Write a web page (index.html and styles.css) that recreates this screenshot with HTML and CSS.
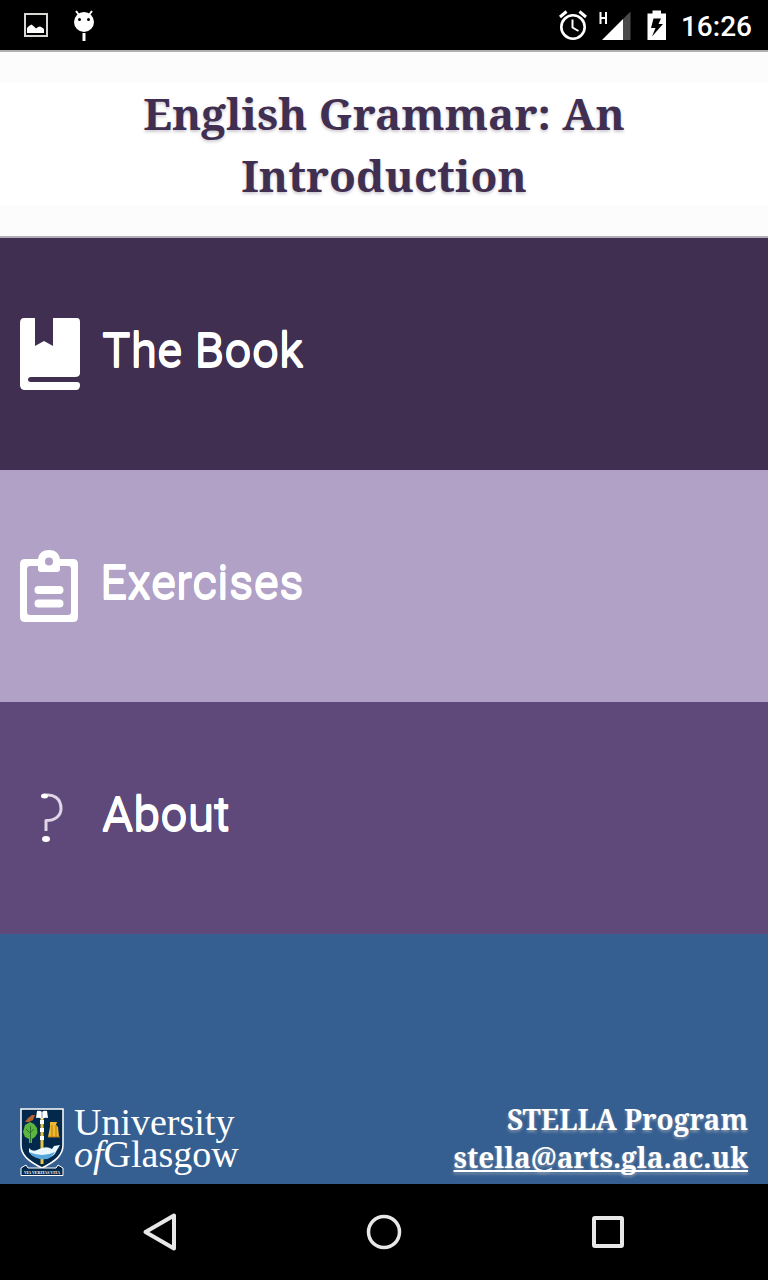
FILE: index.html
```html
<!DOCTYPE html>
<html lang="en">
<head>
<meta charset="utf-8">
<meta name="viewport" content="width=device-width, initial-scale=1">
<title>English Grammar: An Introduction</title>
<link rel="stylesheet" href="styles.css">
</head>
<body>
<div class="status">
  <div class="status-group notifications">
    <svg width="24" height="24" viewBox="0 0 24 24" aria-hidden="true"><rect x="1" y="1" width="22" height="22" fill="none" stroke="#d5d8d2" stroke-width="2"/><path d="M3 20V15L5 13L7.500 11.500L10 13.500L12 15.500L14 14L16 13.500L18 14.500L20 16V20Z" fill="#fff"/></svg>
    <svg width="24" height="32" viewBox="0 0 24 32" aria-hidden="true"><circle cx="12" cy="13" r="10" fill="#fff"/><path d="M4 2L7 6M20 2L17 6" stroke="#fff" stroke-width="2"/><circle cx="7.500" cy="10.500" r="1.500"/><circle cx="16.500" cy="10.500" r="1.500"/><path d="M12 24V32" stroke="#fff" stroke-width="3"/></svg>
  </div>
  <div class="status-group">
    <svg width="28" height="32" viewBox="0 0 28 32" aria-hidden="true" fill="none" stroke="#fff"><circle cx="14" cy="18" r="11.700" stroke-width="2.600"/><path d="M13.500 10.500V18.500L19.500 22" stroke-width="2"/><path d="M1 8L7.500 2.500M27 8L20.500 2.500" stroke-width="3"/></svg>
    <svg class="signal" width="32" height="32" viewBox="0 0 32 32" aria-hidden="true"><path d="M1.500 3V15M7 3V15M1.500 9H7" fill="none" stroke="#fff" stroke-width="2"/><path d="M3 31L24 10V31Z" fill="#fff"/><path d="M24 10L31.500 2.500V31H24Z" fill="#4a4a4a"/></svg>
    <svg class="battery" width="20" height="32" viewBox="0 0 20 32" aria-hidden="true"><path d="M.5 4.500H5.500V1.500H14V4.500H19V31H.5Z" fill="#fff"/><path d="M6.500 9.500H14L11.500 15H16L5 27.500L8.500 19H4Z" fill="#000"/></svg>
    <time class="clock">16:26</time>
  </div>
</div>
<header class="header"><h1 class="title">English Grammar: An Introduction</h1></header>
<nav class="menu">
  <a class="item book" href="#book">
    <svg class="icon" width="60" height="72" viewBox="0 0 60 72" aria-hidden="true"><path fill="#fff" d="M4 0H15V28L24 23L33 28V0H57Q60 0 60 4V55Q60 59 55 59H11Q8 59 8 61.500Q8 64 11 64H57Q60 64 60 67Q60 72 56 72H5Q0 72 0 67V5Q0 0 4 0Z"/></svg>
    <span class="label">The Book</span>
  </a>
  <a class="item exercises" href="#exercises">
    <svg class="icon" width="58" height="72" viewBox="0 0 58 72" aria-hidden="true"><path fill="#fff" fill-rule="evenodd" d="M5 9H18C19 3 23 0 29 0S39 3 40 9H53Q58 9 58 14V67Q58 72 53 72H5Q0 72 0 67V14Q0 9 5 9ZM18 16H10Q7 16 7 19V62Q7 65 10 65H48Q51 65 51 62V19Q51 16 48 16H40V19Q40 22 37 22H21Q18 22 18 19ZM29 7.500A4 4 0 1 0 29 15.500A4 4 0 1 0 29 7.500Z"/><path d="M18.500 40H39.500M18.500 53.500H39.500" stroke="#fff" stroke-width="8" stroke-linecap="round"/></svg>
    <span class="label">Exercises</span>
  </a>
  <a class="item about" href="#about">
    <svg class="icon" width="60" height="72" viewBox="0 0 60 72" aria-hidden="true"><path d="M23 13.500C34 11 41 17 41 26.500C41 34 35 38.500 26 38.500V49" fill="none" stroke="#e0d6e8" stroke-width="3" stroke-linejoin="round"/><ellipse cx="24.500" cy="14" rx="3.500" ry="2.500" fill="#fff"/><ellipse cx="26" cy="57" rx="4" ry="3" fill="#fff"/></svg>
    <span class="label">About</span>
  </a>
</nav>
<footer class="footer">
  <div class="brand">
    <svg width="44" height="68" viewBox="0 1 44 68" role="img" aria-label="University crest"><path d="M1 2H43V38C43 48 36 54 22 61C8 54 1 48 1 38Z" fill="#02294b" stroke="#fff" stroke-width="1.500"/><path d="M22 11V57" stroke="#e8c64c" stroke-width="3"/><path d="M22 13V17M22 21V25M22 29V33" stroke="#fff" stroke-width="4"/><path d="M17 4Q20 3 22 5Q24 3 27 4L28 11Q25 10 22 12Q19 10 16 11Z" fill="#fff"/><path d="M22 5V11" stroke="#7c93a7"/><path d="M5 15L8 11L12 8L15 8L13 13L9 15Z" fill="#b8632d"/><path d="M10 15L14 17L17 21L17.500 26L15 30L12 32V36H9V32L5 30L3 25L5 18Z" fill="#5cb53c"/><path d="M10.500 19V36M6 22L10 26L14 22" stroke="#28732d" fill="none"/><path d="M30 15H37L36 18L38 20L39 30H28L30 20Z" fill="#f0b92b"/><path d="M32 18V30M36 18V30M28 30H40" stroke="#b57918"/><path d="M9 41Q12 45 17 43Q26 38 32 42L34 39L40 38L37 43Q34 51 24 52Q13 51 9 45Z" fill="#e9f7ff"/><path d="M9 45Q22 51 35 45Q30 54 20 52Q12 50 9 45Z" fill="#55a8dc"/><path d="M1 61L6 58L8 61H36L38 58L43 61V68.500H1Z" fill="#02294b" stroke="#fff"/><text class="motto" x="22" y="67" text-anchor="middle">VIA VERITAS VITA</text></svg>
    <p class="wordmark"><i>University</i><br><i class="of">of</i><i>Glasgow</i></p>
  </div>
  <address class="contact">STELLA Program<br><a class="mail" href="mailto:stella@arts.gla.ac.uk">stella@arts.gla.ac.uk</a></address>
</footer>
<div class="navbar">
  <button class="key" aria-label="Back"><svg width="40" height="40" viewBox="0 0 40 40"><path d="M5.500 20L34 3.500V36.500Z" fill="none" stroke="#e8e8e8" stroke-width="4" stroke-linejoin="round"/></svg></button>
  <button class="key" aria-label="Home"><svg width="40" height="40" viewBox="0 0 40 40"><circle cx="20" cy="20" r="15.500" fill="none" stroke="#e8e8e8" stroke-width="3.500"/></svg></button>
  <button class="key" aria-label="Recent apps"><svg width="40" height="40" viewBox="0 0 40 40"><rect x="6" y="6" width="28" height="28" rx="1" fill="none" stroke="#e8e8e8" stroke-width="4" stroke-linejoin="round"/></svg></button>
</div>
</body>
</html>
```
FILE: styles.css
```css
* { box-sizing: border-box; }
body {
  margin: 0;
  min-height: 100vh;
  display: flex;
  flex-direction: column;
  background: #000;
  font-family: Roboto, sans-serif;
  color: #fff;
}
svg { display: block; flex: none; }
.status {
  height: 50px;
  padding: 0 16px 0 24px;
  display: flex;
  align-items: center;
  justify-content: space-between;
}
.status-group { display: flex; align-items: center; }
.notifications { gap: 24px; }
.signal { margin-left: 12px; }
.battery { margin: 0 14px 0 16px; }
.clock {
  padding-top: 4px;
  font-size: 28px;
  font-weight: 500;
  line-height: 32px;
}
.header {
  padding: 30px 60px;
  border-top: 2px solid #b0b0b0;
  border-bottom: 2px solid #b3afb6;
  background: linear-gradient(#fcfcfc 30px, #fff 30px, #fff calc(100% - 30px), #fcfcfc calc(100% - 30px));
}
.title {
  max-width: 560px;
  margin: 0 auto;
  color: #402f50;
  font: bold 44px/62px "Noto Serif", "Droid Serif", "Liberation Serif", serif;
  text-align: center;
  text-shadow: 0 2px 3px rgba(64, 47, 80, .25);
}
.item {
  min-height: 232px;
  padding: 0 20px;
  display: flex;
  align-items: center;
  gap: 22px;
  color: #fff;
  text-decoration: none;
}
.book { background: #402f50; }
.exercises { background: #b1a1c7; }
.about { background: #5f497a; }
.label {
  padding-bottom: 8px;
  font-size: 48px;
  line-height: 56px;
  text-shadow: 0 1px 0 #fff, 0 2px 0 #fff;
}
.footer {
  flex: 1;
  min-height: 250px;
  padding: 0 20px 8px;
  display: flex;
  align-items: flex-end;
  justify-content: space-between;
  background: #365f91;
}
.brand { display: flex; align-items: flex-end; gap: 10px; }
.motto { font: bold 4px "Liberation Serif", serif; fill: #fff; }
.wordmark {
  margin: 0;
  padding-bottom: 6px;
  font: 38px/32px "Liberation Serif", serif;
}
.wordmark i { font-style: normal; }
.wordmark .of { font-style: italic; }
.contact {
  font: bold 28px/38px "Noto Serif", "Droid Serif", "Liberation Serif", serif;
  text-align: right;
  text-shadow: 0 2px 3px rgba(200, 200, 200, .5);
}
.mail { color: #fff; text-decoration-skip-ink: none; }
.navbar {
  height: 96px;
  display: flex;
  justify-content: center;
  gap: 184px;
}
.key {
  padding: 0;
  border: 0;
  background: none;
}
```
